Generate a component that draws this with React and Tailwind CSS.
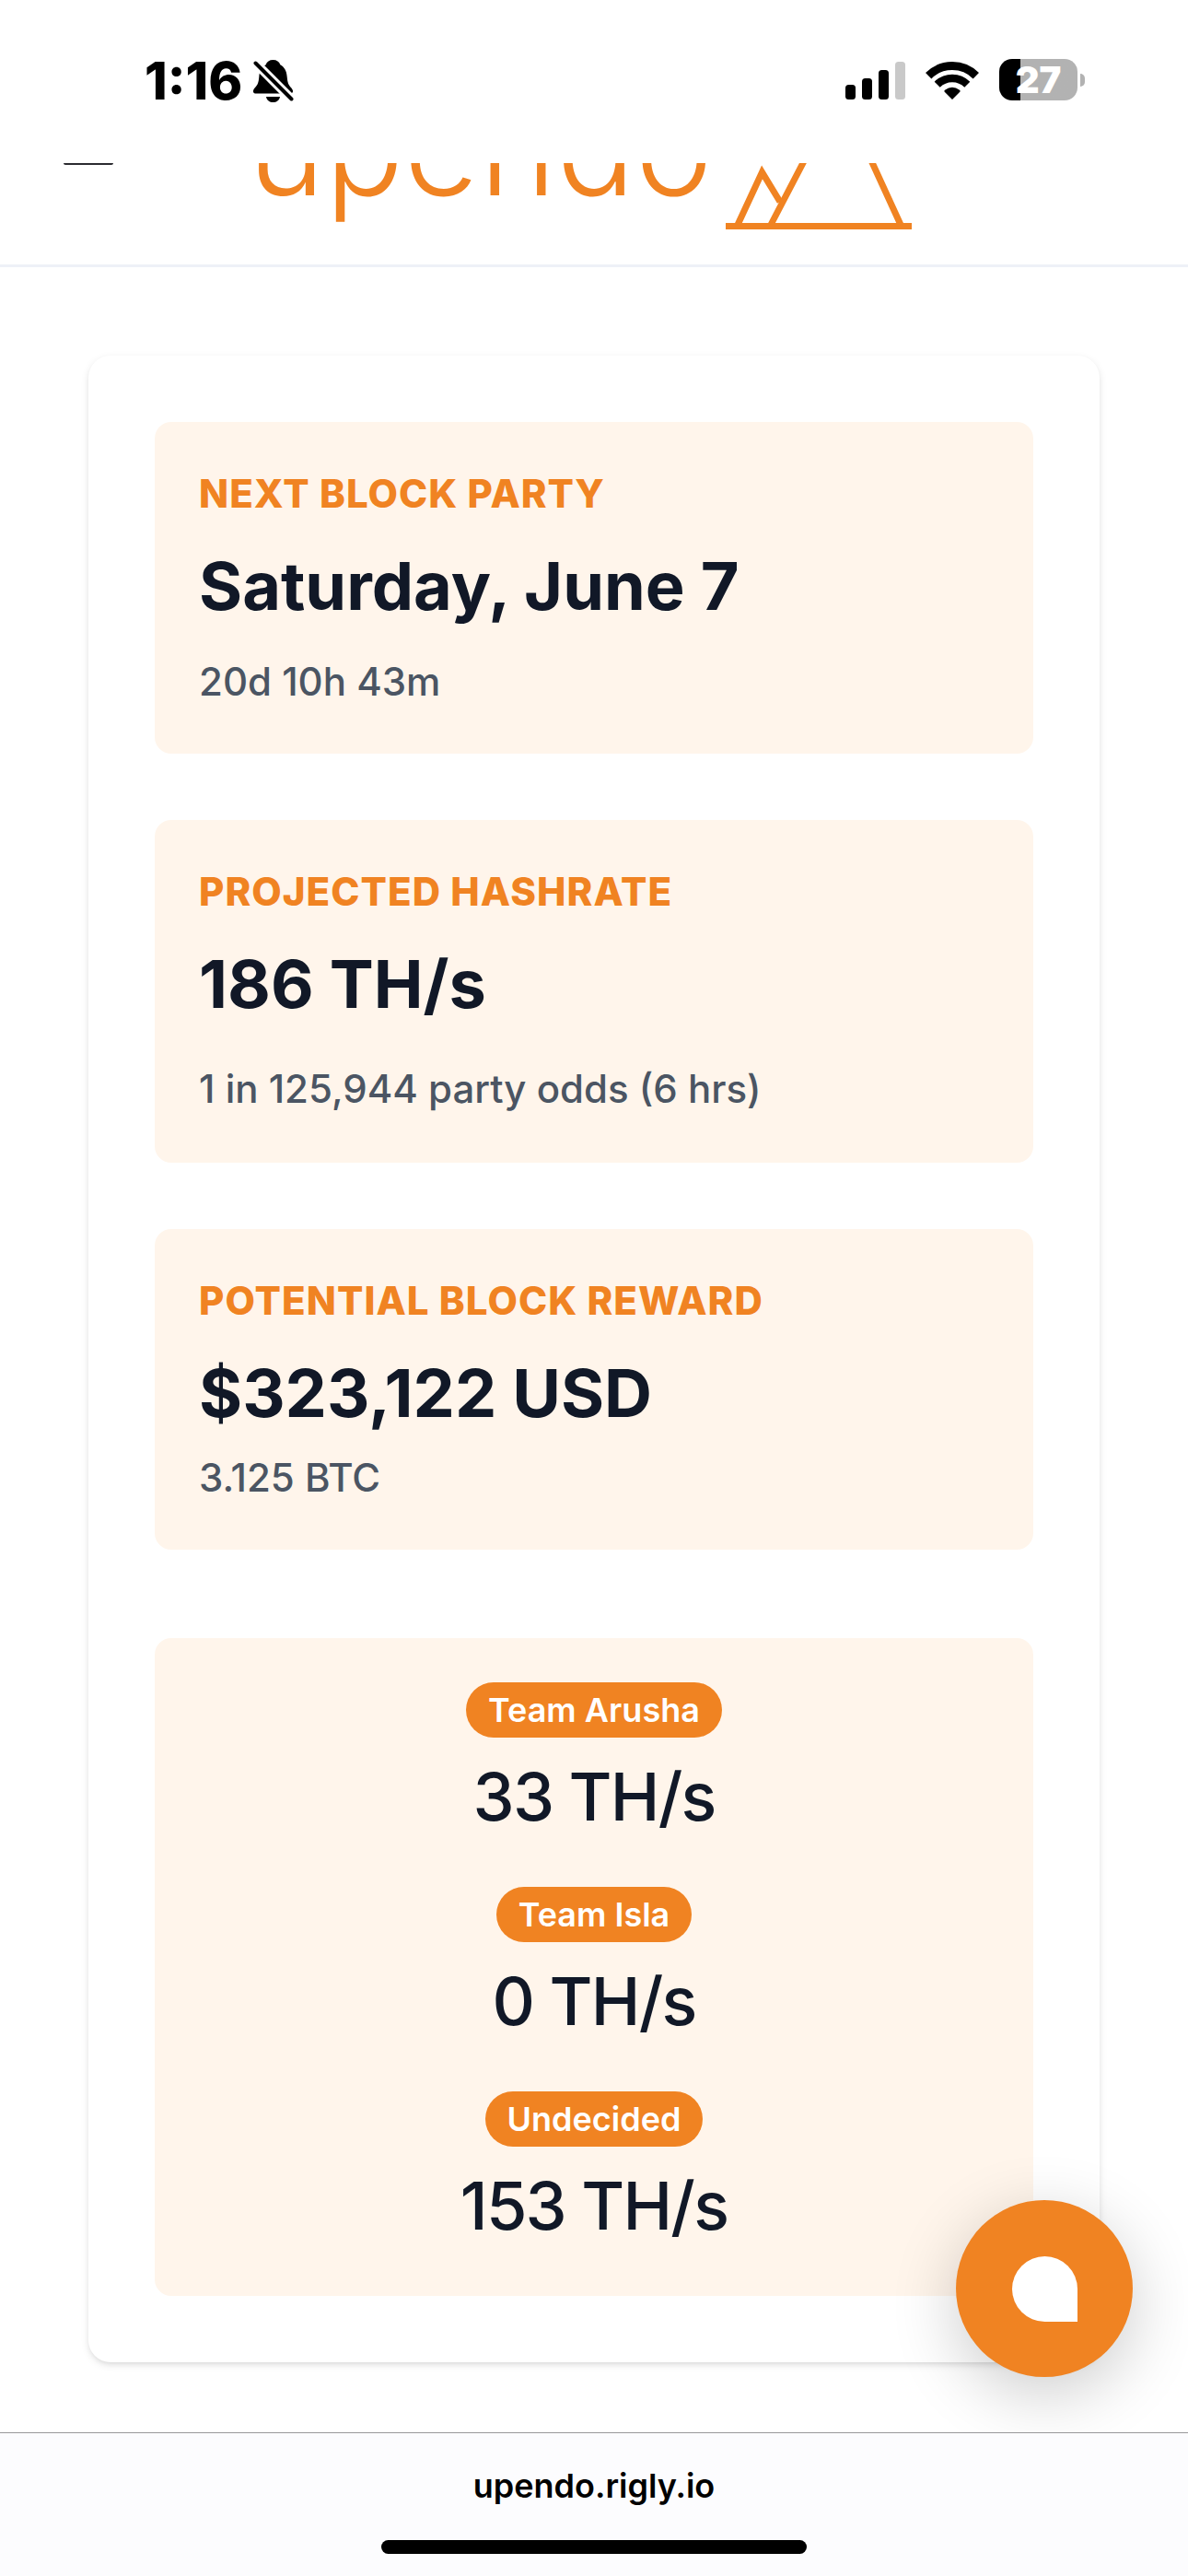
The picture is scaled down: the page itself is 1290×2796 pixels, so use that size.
const stats = [
  {
    label: "NEXT BLOCK PARTY",
    value: "Saturday, June 7",
    note: "20d 10h 43m",
    noteClass: "mt-[34px]",
  },
  {
    label: "PROJECTED HASHRATE",
    value: "186 TH/s",
    note: "1 in 125,944 party odds (6 hrs)",
    noteClass: "mt-11 mb-[2px]",
  },
  {
    label: "POTENTIAL BLOCK REWARD",
    value: "$323,122 USD",
    note: "3.125 BTC",
    noteClass: "mt-[22px]",
  },
];

const teams = [
  { name: "Team Arusha", hashrate: "33 TH/s" },
  { name: "Team Isla", hashrate: "0 TH/s" },
  { name: "Undecided", hashrate: "153 TH/s" },
];

function BellOffIcon() {
  return (
    <svg width="44" height="46" viewBox="0 0 44 46" aria-hidden="true">
      <path d="M21.500 0c-4 0-6.800 2-7.800 5.200C9 8 6.800 12 6.300 18.500c-.5 6-1.500 8.500-4.300 11.500-3.200 3.500-2.500 6.500 1 6.500h37c3.500 0 4.200-3 1-6.500-2.800-3-3.800-5.500-4.300-11.500C36.200 12 34 8 29.300 5.200 28.300 2 25.500 0 21.500 0z" />
      <path d="M14 40h15c-.8 4-3.800 6-7.500 6s-6.700-2-7.500-6z" />
      <path d="M-2-1L48 49" stroke="#fff" strokeWidth="10" />
      <path d="M2.500 3.500L41.500 42.500" stroke="#000" strokeWidth="4" strokeLinecap="round" />
    </svg>
  );
}

function SignalIcon() {
  return (
    <svg width="65" height="42" viewBox="0 0 65 42" aria-hidden="true">
      <rect x="0" y="26" width="11" height="16" rx="3.500" />
      <rect x="18" y="19" width="11" height="23" rx="3.500" />
      <rect x="36" y="10" width="11" height="32" rx="3.500" />
      <rect x="54" y="1" width="11" height="41" rx="3.500" fill="#c9c9c9" />
    </svg>
  );
}

function WifiIcon() {
  return (
    <svg width="58" height="42" viewBox="0 0 58 42" aria-hidden="true">
      <g fill="none" stroke="#000">
        <path d="M3.200 16.200A36.500 36.500 0 0 1 54.800 16.200" strokeWidth="9" />
        <path d="M12.700 25.700A23 23 0 0 1 45.300 25.700" strokeWidth="8.500" />
      </g>
      <path d="M29 42L20.500 33.500Q20 32.500 21 31.800Q29 25.500 37 31.800Q38 32.500 37.500 33.500Z" />
    </svg>
  );
}

function Battery() {
  return (
    <div className="flex items-center gap-[3px]">
      <div className="flex h-[45px] w-[85px] items-center justify-center rounded-[14px] bg-linear-to-r from-black from-27% to-[#b2b2b2] to-27% text-[40px] leading-none font-black text-white">
        27
      </div>
      <div className="h-[14px] w-[5px] rounded-r-full bg-[#b2b2b2]" />
    </div>
  );
}

function StatusBar() {
  return (
    <div className="flex h-[177px] items-start justify-between bg-white pt-16 pr-[112px] pl-[157px]">
      <div className="flex items-center gap-3">
        <span className="text-[56px] leading-[48px] font-extrabold">1:16</span>
        <BellOffIcon />
      </div>
      <div className="flex items-center gap-[22px]">
        <SignalIcon />
        <WifiIcon />
        <Battery />
      </div>
    </div>
  );
}

function Header() {
  return (
    <header className="flex h-[113px] items-end overflow-hidden border-b-3 border-[#eef1f7] pr-[300px] pl-[69px]">
      <button
        type="button"
        aria-label="Open menu"
        className="flex w-[54px] flex-col gap-4 self-start"
      >
        <span className="h-[2px] w-full rounded-b-sm bg-[#2b2b30]" />
      </button>
      <a
        href="/"
        aria-label="upendo"
        className="ml-auto flex items-end gap-[14px] pb-[38px] text-[#f08322]"
      >
        <span className="text-[142px] leading-[178px] font-light">upendo</span>
        <svg width="202" height="156" viewBox="0 0 202 156" aria-hidden="true">
          <g fill="none" stroke="currentColor" strokeWidth="7">
            <path d="M0 152.500h202" />
            <path d="M13 151L39.500 94L59 126" />
            <path d="M49 151L124 7L190 151" />
          </g>
        </svg>
      </a>
    </header>
  );
}

function StatCard({ label, value, note, noteClass }) {
  return (
    <div className="rounded-[18px] bg-[#fff5eb] p-12">
      <h2 className="text-[42px] leading-[60px] font-extrabold tracking-wide text-[#f08322]">
        {label}
      </h2>
      <p className="mt-[30px] text-[72px] leading-[80px] font-bold text-[#111827]">
        {value}
      </p>
      <p
        className={`text-[42px] leading-[60px] font-medium text-[#4b5563] ${noteClass}`}
      >
        {note}
      </p>
    </div>
  );
}

export default function App() {
  return (
    <div className="flex min-h-screen flex-col bg-white font-[Inter,'Liberation_Sans',sans-serif] text-black">
      <StatusBar />
      <Header />

      <main className="flex-1 px-24 pt-24 pb-[76px]">
        <section className="rounded-3xl bg-white p-[72px] shadow-[0_3px_9px_rgba(0,0,0,0.1),0_3px_6px_-3px_rgba(0,0,0,0.1)]">
          <div className="flex flex-col gap-[72px]">
            {stats.map((stat) => (
              <StatCard key={stat.label} {...stat} />
            ))}
          </div>

          <ul className="mt-24 rounded-[18px] bg-[#fff5eb] pt-12">
            {teams.map((team) => (
              <li
                key={team.name}
                className="flex flex-col items-center pb-[58px]"
              >
                <span className="rounded-full bg-[#f08322] px-6 text-[36px] leading-[60px] font-semibold text-white">
                  {team.name}
                </span>
                <span className="mt-6 text-[72px] leading-[80px] font-medium tracking-tight text-[#111827]">
                  {team.hashrate}
                </span>
              </li>
            ))}
          </ul>
        </section>
      </main>

      {/* Chat launcher */}
      <button
        type="button"
        aria-label="Open chat"
        className="fixed right-[60px] bottom-[216px] flex size-48 items-center justify-center rounded-full bg-[#f08322] shadow-[0_18px_72px_rgba(0,0,0,0.2)]"
      >
        <span className="size-[71px] rounded-full rounded-br-none bg-white" />
      </button>

      {/* Browser bar */}
      <footer className="sticky bottom-0 flex flex-col items-center border-t border-[#98989a] bg-[#fcfcfe] pt-[33px] pb-6">
        <a href="https://upendo.rigly.io" className="text-[36px] leading-[48px] font-semibold">
          upendo.rigly.io
        </a>
        <div className="mt-[35px] h-[15px] w-[462px] rounded-full bg-black" />
      </footer>
    </div>
  );
}
